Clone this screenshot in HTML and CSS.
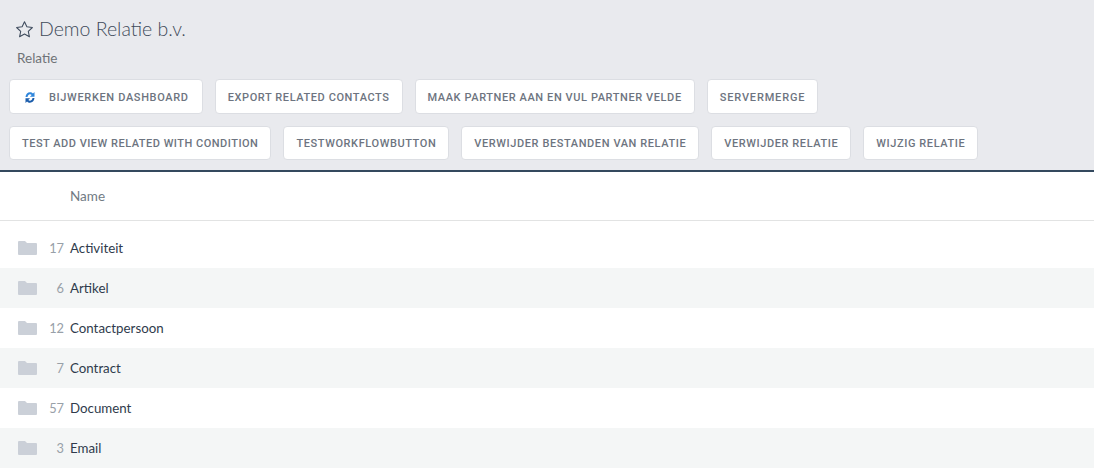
FILE: index.html
```html
<!DOCTYPE html>
<html lang="nl">
<head>
<meta charset="utf-8">
<title>Demo Relatie b.v.</title>
<link rel="stylesheet" href="styles.css">
</head>
<body>
<header class="head">
  <h1 class="title">
    <svg class="star" viewBox="0 0 20 20" width="19" height="19" aria-hidden="true"><path d="M10 1.800l2.500 5.400 5.800.7-4.300 4 1.200 5.800L10 14.800l-5.200 2.900L6 11.900l-4.300-4 5.800-.7z" fill="none" stroke="#3d4a5c" stroke-width="1.100" stroke-linejoin="round"/></svg>
    <span>Demo Relatie b.v.</span>
  </h1>
  <div class="sub">Relatie</div>
  <div class="actions actions-first">
    <button class="btn btn-icon">
      <svg class="sync" viewBox="0 0 14 14" width="14" height="15" aria-hidden="true">
        <path d="M2.500 6.500C2.800 3.700 4.700 1.800 7 1.800c1.200 0 2.200.5 3 1.300L11.500 1.500v4.700H6.900l1.800-1.800C8.300 4 7.700 3.700 7 3.700 5.800 3.700 4.800 4.800 4.500 6.500z" fill="#2f86dc"/>
        <path d="M11.500 7.500c-.3 2.800-2.200 4.700-4.500 4.700-1.200 0-2.200-.5-3-1.300l-1.500 1.600V7.800h4.600L5.300 9.600c.4.400 1 .7 1.700.7 1.200 0 2.200-1.100 2.500-2.800z" fill="#1a5cab"/>
      </svg>
      BIJWERKEN DASHBOARD
    </button>
    <button class="btn">EXPORT RELATED CONTACTS</button>
    <button class="btn">MAAK PARTNER AAN EN VUL PARTNER VELDE</button>
    <button class="btn btn-wide">SERVERMERGE</button>
  </div>
  <div class="actions actions-second">
    <button class="btn btn-tight">TEST ADD VIEW RELATED WITH CONDITION</button>
    <button class="btn">TESTWORKFLOWBUTTON</button>
    <button class="btn">VERWIJDER BESTANDEN VAN RELATIE</button>
    <button class="btn">VERWIJDER RELATIE</button>
    <button class="btn">WIJZIG RELATIE</button>
  </div>
</header>
<main>
  <div class="col-head">Name</div>
  <ul class="rows">
    <li class="row"><svg class="folder" viewBox="0 0 19 14" width="19" height="14" aria-hidden="true"><path d="M0 1a1 1 0 0 1 1-1h6l2 2h9a1 1 0 0 1 1 1v10a1 1 0 0 1-1 1H1a1 1 0 0 1-1-1z"/></svg><span class="count">17</span><span class="name">Activiteit</span></li>
    <li class="row"><svg class="folder" viewBox="0 0 19 14" width="19" height="14" aria-hidden="true"><path d="M0 1a1 1 0 0 1 1-1h6l2 2h9a1 1 0 0 1 1 1v10a1 1 0 0 1-1 1H1a1 1 0 0 1-1-1z"/></svg><span class="count">6</span><span class="name">Artikel</span></li>
    <li class="row"><svg class="folder" viewBox="0 0 19 14" width="19" height="14" aria-hidden="true"><path d="M0 1a1 1 0 0 1 1-1h6l2 2h9a1 1 0 0 1 1 1v10a1 1 0 0 1-1 1H1a1 1 0 0 1-1-1z"/></svg><span class="count">12</span><span class="name">Contactpersoon</span></li>
    <li class="row"><svg class="folder" viewBox="0 0 19 14" width="19" height="14" aria-hidden="true"><path d="M0 1a1 1 0 0 1 1-1h6l2 2h9a1 1 0 0 1 1 1v10a1 1 0 0 1-1 1H1a1 1 0 0 1-1-1z"/></svg><span class="count">7</span><span class="name">Contract</span></li>
    <li class="row"><svg class="folder" viewBox="0 0 19 14" width="19" height="14" aria-hidden="true"><path d="M0 1a1 1 0 0 1 1-1h6l2 2h9a1 1 0 0 1 1 1v10a1 1 0 0 1-1 1H1a1 1 0 0 1-1-1z"/></svg><span class="count">57</span><span class="name">Document</span></li>
    <li class="row"><svg class="folder" viewBox="0 0 19 14" width="19" height="14" aria-hidden="true"><path d="M0 1a1 1 0 0 1 1-1h6l2 2h9a1 1 0 0 1 1 1v10a1 1 0 0 1-1 1H1a1 1 0 0 1-1-1z"/></svg><span class="count">3</span><span class="name">Email</span></li>
  </ul>
</main>
</body>
</html>
```
FILE: styles.css
```css
* { box-sizing: border-box; }
html, body { margin: 0; padding: 0; background: #fff; overflow: hidden; }
body { font-family: Lato, "Open Sans", sans-serif; color: #2f3b4c; }
.head {
  height: 172px;
  background: #e9eaee;
  border-bottom: 2px solid #34495e;
  padding: 17px 9px 0;
}
.title {
  margin: 0 0 0 6px;
  display: flex;
  align-items: center;
  gap: 5px;
  font-size: 19.500px;
  font-weight: 300;
  line-height: 24px;
  color: #3f4a5a;
}
.star { flex: none; }
.sub {
  margin: 8px 0 0 8px;
  font-size: 13.500px;
  line-height: 18px;
  color: #6f7377;
}
.actions {
  display: flex;
  column-gap: 12px;
  margin-top: 12px;
}
.btn {
  height: 35px;
  padding: 0 12px;
  background: #fff;
  border: 1px solid #dcdee3;
  border-radius: 4px;
  font-family: Roboto, sans-serif;
  font-size: 11px;
  font-weight: 500;
  letter-spacing: .59px;
  color: #6d7480;
  white-space: nowrap;
  display: flex;
  align-items: center;
}
.actions-first .btn { padding-top: 1px; }
.actions-second .btn { height: 34px; }
.btn-icon { padding-left: 13px; padding-right: 13px; letter-spacing: .65px; }
.btn-tight { letter-spacing: .5px; }
.btn-wide { letter-spacing: .84px; }
.sync { margin-right: 12px; flex: none; }
.col-head {
  height: 49px;
  border-bottom: 1px solid #e2e3e3;
  padding-left: 70px;
  display: flex;
  align-items: center;
  font-size: 13.500px;
  color: #717b84;
}
.rows { list-style: none; margin: 7px 0 0; padding: 0; }
.row {
  height: 40px;
  display: flex;
  align-items: center;
  padding-left: 18px;
}
.row:nth-child(even) { background: #f4f6f6; }
.folder { flex: none; fill: #cbd0d8; }
.count {
  width: 27px;
  text-align: right;
  font-size: 12.800px;
  color: #98a0a8;
}
.name {
  margin-left: 6px;
  font-size: 13.300px;
  color: #2f3b4c;
}
```
